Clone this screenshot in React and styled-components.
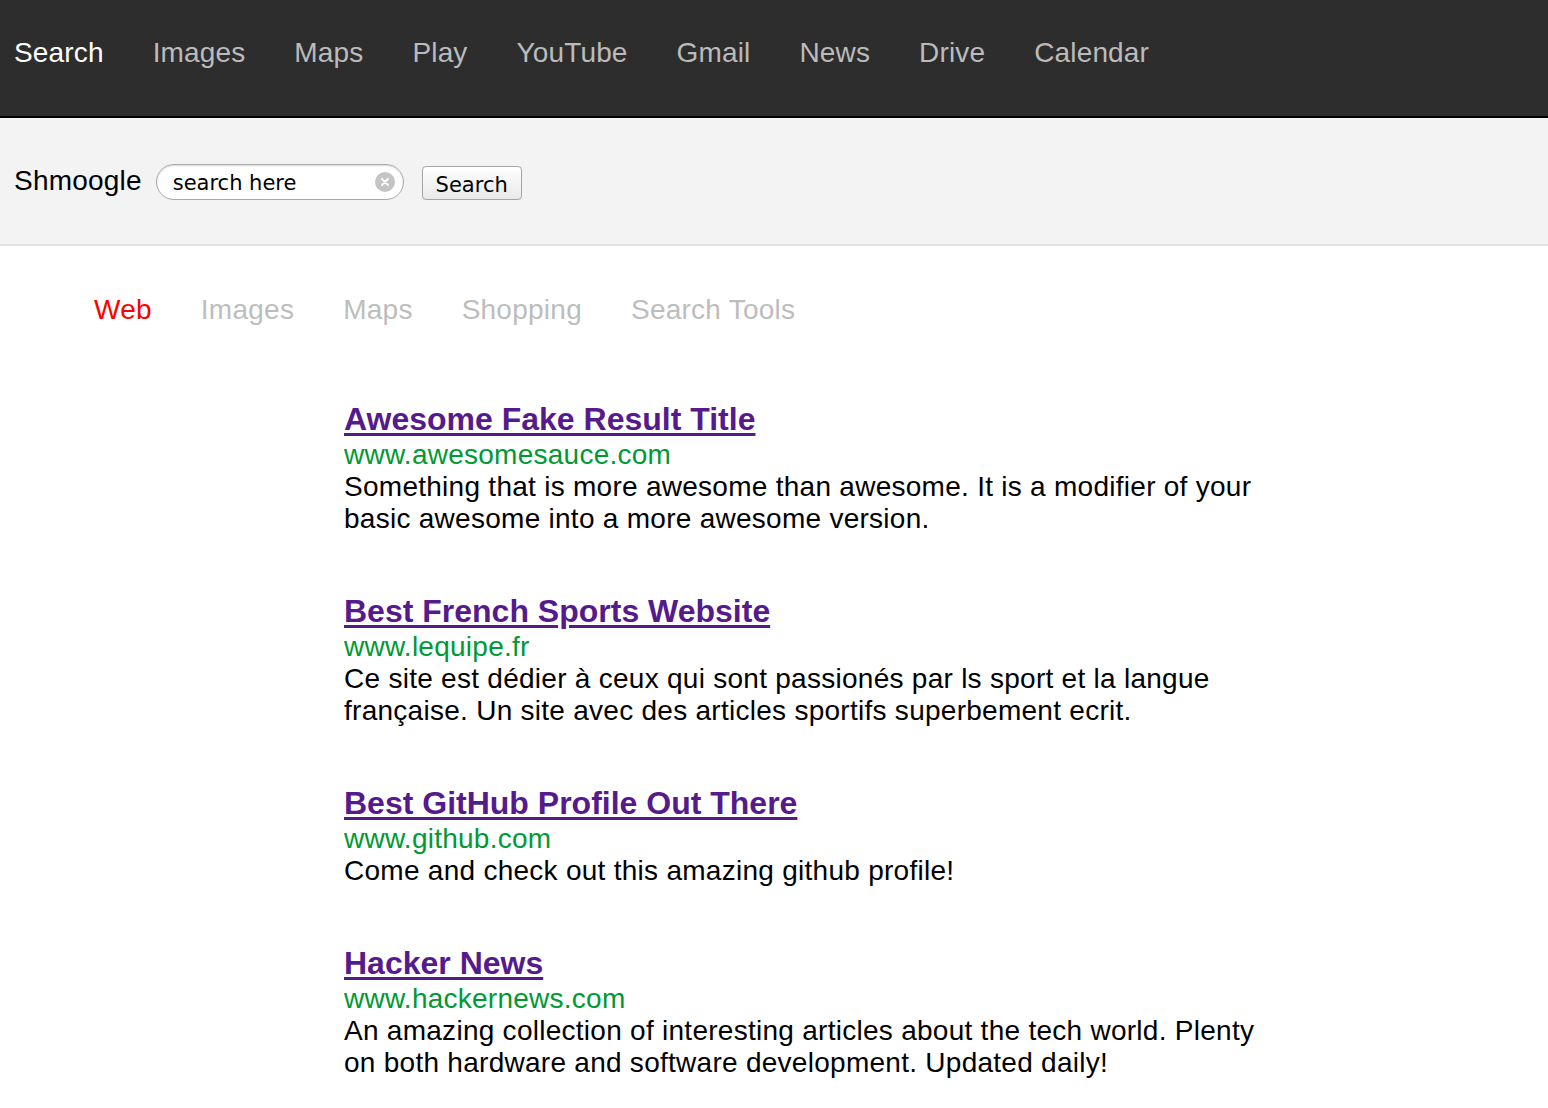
import React, { useState } from 'react';
import styled, { createGlobalStyle } from 'styled-components';

const GlobalStyle = createGlobalStyle`
  body {
    margin: 0;
    background: #fff;
    font-family: "Liberation Sans", Arial, Helvetica, sans-serif;
  }
`;

const TopNav = styled.nav`
  display: flex;
  align-items: center;
  gap: 49px;
  height: 106px;
  padding: 0 0 10px 14px;
  background-color: #2d2d2d;
  border-bottom: 2px solid #000;
`;

const TopLink = styled.a`
  font-size: 28px;
  letter-spacing: 0.15px;
  color: ${props => (props.active ? '#fff' : '#bbbbbb')};
  text-decoration: none;
  cursor: pointer;
`;

const SearchBar = styled.div`
  display: flex;
  align-items: center;
  height: 126px;
  padding-left: 14px;
  background-color: #f3f3f3;
  border-bottom: 2px solid #e2e2e2;
`;

const Brand = styled.div`
  font-size: 28px;
  letter-spacing: 0.2px;
  color: #000;
  margin-right: 14px;
`;

const InputWrap = styled.div`
  position: relative;
  display: flex;
  align-items: center;
  width: 248px;
  height: 36px;
  box-sizing: border-box;
  border: 1px solid #a9a9a9;
  border-radius: 18px;
  background: #fff;
  box-shadow: inset 0 1px 2px rgba(0, 0, 0, 0.15);
  margin-right: 18px;
  margin-top: 2px;
`;

const SearchInput = styled.input`
  border: none;
  outline: none;
  background: transparent;
  font-family: "DejaVu Sans", "Liberation Sans", sans-serif;
  font-size: 21px;
  color: #000;
  padding: 2px 0 0 16px;
  width: 190px;
  height: 100%;
  box-sizing: border-box;
`;

const ClearButton = styled.span`
  position: absolute;
  right: 8px;
  top: 50%;
  transform: translateY(-50%);
  width: 20px;
  height: 20px;
  border-radius: 50%;
  background: #c4c4c4;
  display: flex;
  align-items: center;
  justify-content: center;
`;

const SearchButton = styled.button`
  width: 100px;
  height: 34px;
  margin-top: 4px;
  border: 1px solid #a5a5a5;
  border-radius: 4px;
  background: linear-gradient(#ffffff, #f4f4f4 50%, #e9e9e9);
  font-family: "DejaVu Sans", "Liberation Sans", sans-serif;
  font-size: 21px;
  color: #000;
  padding: 3px 0 0;
  cursor: pointer;
`;

const Tabs = styled.div`
  display: flex;
  gap: 49px;
  padding: 48px 0 0 94px;
  height: 32px;
  align-items: center;
`;

const Tab = styled.a`
  font-size: 28px;
  letter-spacing: 0.25px;
  color: ${props => (props.active ? '#ff0000' : '#bdbdbd')};
  text-decoration: none;
  cursor: pointer;
`;

const Results = styled.div`
  display: flex;
  flex-direction: column;
  gap: 57px;
  width: 920px;
  margin: 74px 0 0 344px;
`;

const Result = styled.div`
  display: flex;
  flex-direction: column;
`;

const ResultTitle = styled.a`
  font-size: 32px;
  font-weight: bold;
  line-height: 39px;
  color: #551a8b;
  text-decoration: underline;
  text-underline-offset: 3px;
  align-self: flex-start;
`;

const ResultUrl = styled.div`
  font-size: 28px;
  line-height: 32px;
  letter-spacing: 0.25px;
  color: #009933;
`;

const ResultText = styled.div`
  font-size: 28px;
  line-height: 32px;
  letter-spacing: 0.27px;
  color: #000;
`;

const navItems = ['Search', 'Images', 'Maps', 'Play', 'YouTube', 'Gmail', 'News', 'Drive', 'Calendar'];
const tabs = ['Web', 'Images', 'Maps', 'Shopping', 'Search Tools'];

const results = [
  {
    title: 'Awesome Fake Result Title',
    url: 'www.awesomesauce.com',
    text: 'Something that is more awesome than awesome. It is a modifier of your basic awesome into a more awesome version.',
  },
  {
    title: 'Best French Sports Website',
    url: 'www.lequipe.fr',
    text: 'Ce site est dédier à ceux qui sont passionés par ls sport et la langue française. Un site avec des articles sportifs superbement ecrit.',
  },
  {
    title: 'Best GitHub Profile Out There',
    url: 'www.github.com',
    text: 'Come and check out this amazing github profile!',
  },
  {
    title: 'Hacker News',
    url: 'www.hackernews.com',
    text: 'An amazing collection of interesting articles about the tech world. Plenty on both hardware and software development. Updated daily!',
  },
];

export default function App() {
  const [query, setQuery] = useState('search here');

  return (
    <>
      <GlobalStyle />
      <TopNav>
        {navItems.map((item, i) => (
          <TopLink key={item} href="#" active={i === 0}>{item}</TopLink>
        ))}
      </TopNav>

      <SearchBar>
        <Brand>Shmoogle</Brand>
        <InputWrap>
          <SearchInput value={query} onChange={e => setQuery(e.target.value)} />
          <ClearButton onClick={() => setQuery('')}>
            <svg width="10" height="10" viewBox="0 0 10 10">
              <path d="M2 2 L8 8 M8 2 L2 8" stroke="#fff" strokeWidth="2" strokeLinecap="round" />
            </svg>
          </ClearButton>
        </InputWrap>
        <SearchButton>Search</SearchButton>
      </SearchBar>

      <Tabs>
        {tabs.map((t, i) => (
          <Tab key={t} href="#" active={i === 0}>{t}</Tab>
        ))}
      </Tabs>

      <Results>
        {results.map(r => (
          <Result key={r.title}>
            <ResultTitle href="#">{r.title}</ResultTitle>
            <ResultUrl>{r.url}</ResultUrl>
            <ResultText>{r.text}</ResultText>
          </Result>
        ))}
      </Results>
    </>
  );
}
